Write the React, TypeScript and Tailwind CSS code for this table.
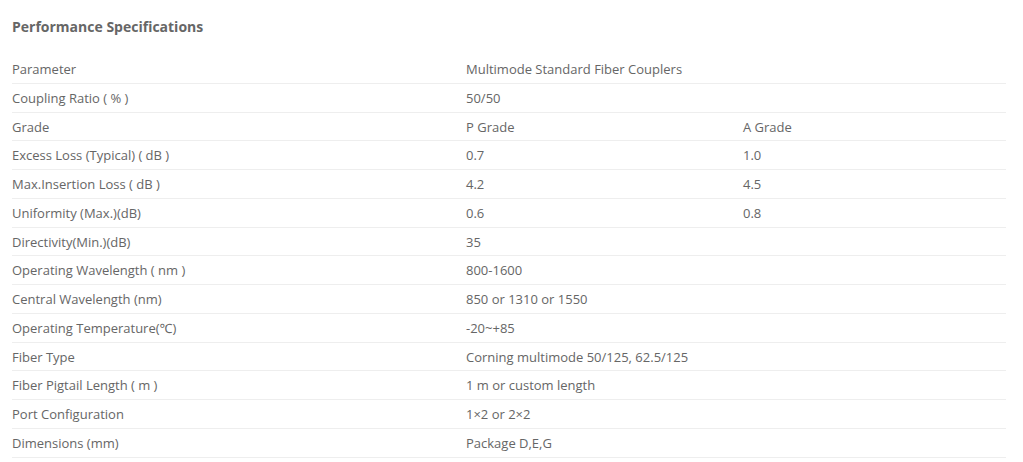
import React from "react";

const rows: [string, string, string?][] = [
  ["Parameter", "Multimode Standard Fiber Couplers"],
  ["Coupling Ratio ( % )", "50/50"],
  ["Grade", "P Grade", "A Grade"],
  ["Excess Loss (Typical) ( dB )", "0.7", "1.0"],
  ["Max.Insertion Loss ( dB )", "4.2", "4.5"],
  ["Uniformity (Max.)(dB)", "0.6", "0.8"],
  ["Directivity(Min.)(dB)", "35"],
  ["Operating Wavelength ( nm )", "800-1600"],
  ["Central Wavelength (nm)", "850 or 1310 or 1550"],
  ["Operating Temperature(℃)", "-20~+85"],
  ["Fiber Type", "Corning multimode 50/125, 62.5/125"],
  ["Fiber Pigtail Length ( m )", "1 m or custom length"],
  ["Port Configuration", "1×2 or 2×2"],
  ["Dimensions (mm)", "Package D,E,G"],
];

export default function App() {
  return (
    <div
      className="w-[1023px] h-[462px] bg-white text-[#666] overflow-hidden"
      style={{ fontFamily: '"Open Sans", "Noto Sans", sans-serif' }}
    >
      <div className="pl-[12px] pr-[17px]">
        <h2 className="pt-[17px] h-[55px] text-[14px] font-bold text-[#666] leading-[20px]">
          Performance Specifications
        </h2>
        <div className="flex flex-col">
          {rows.map((r, i) => (
            <div
              key={i}
              className="flex items-center pt-[2px] h-[28.75px] text-[13px] border-b border-[#eeeeee]"
            >
              <div className="w-[454px]">{r[0]}</div>
              <div className="w-[277px]">{r[1]}</div>
              <div className="flex-1">{r[2] ?? ""}</div>
            </div>
          ))}
        </div>
      </div>
    </div>
  );
}
